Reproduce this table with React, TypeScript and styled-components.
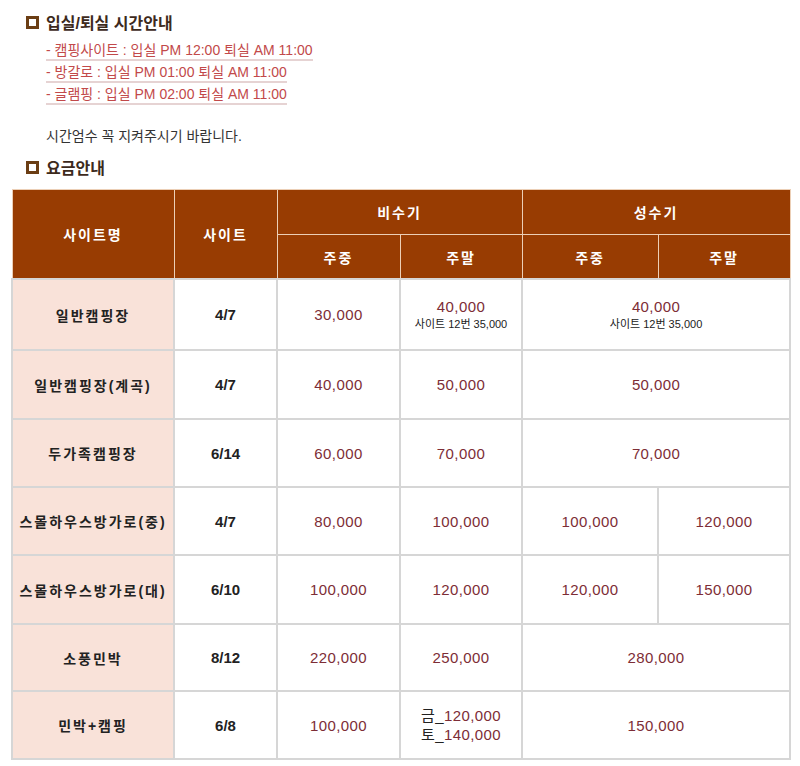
import styled, { createGlobalStyle } from 'styled-components';

const GlobalStyle = createGlobalStyle`
  body {
    margin: 0;
    background: #fff;
    font-family: 'Liberation Sans', 'Noto Sans CJK KR', sans-serif;
    color: #333;
  }
`;

const Page = styled.div`
  width: 800px;
  padding: 11px 0 0 11px;
  box-sizing: border-box;
`;

const Section = styled.div`
  padding-left: 15px;
`;

const Heading = styled.h3`
  display: flex;
  align-items: center;
  gap: 7px;
  margin: 0;
  height: 22px;
  font-size: 16px;
  font-weight: bold;
  color: #3d2a1c;
`;

const HeadIcon = styled.span`
  width: 7px;
  height: 7px;
  border: 3px solid #6b3e14;
  background: #fff;
  flex: none;
`;

const TimeList = styled.ul`
  list-style: none;
  margin: 8px 0 0;
  padding: 0 0 0 20px;
`;

const TimeItem = styled.li`
  height: 22px;
  display: flex;
  align-items: flex-start;
`;

const TimeLink = styled.a`
  font-size: 14px;
  line-height: 18px;
  color: #c2494a;
  text-decoration: none;
  border-bottom: 2px solid #e6d3d3;
`;

const Notice = styled.p`
  margin: 20px 0 11px 20px;
  font-size: 14px;
  line-height: 18px;
  color: #333;
`;

const Table = styled.table`
  margin-top: 11px;
  width: 778px;
  border-collapse: collapse;
  table-layout: fixed;
  font-size: 14px;
`;

const HeadCell = styled.th<{ $h?: number }>`
  background: #983c02;
  color: #fff;
  font-weight: bold;
  letter-spacing: 2px;
  height: ${(p) => p.$h ?? 43}px;
  border: 1px solid #eccfb6;
  padding: 0;
  text-align: center;
  font-size: 14px;
`;

const Row = styled.tr<{ $h?: number }>`
  height: ${(p) => p.$h ?? 68}px;
`;

const NameCell = styled.td`
  background: #f9e2d9;
  border: 2px solid #d6d6d6;
  text-align: center;
  font-weight: bold;
  color: #222;
  letter-spacing: 2px;
  font-size: 14px;
`;

const SiteCell = styled.td`
  border: 2px solid #d6d6d6;
  text-align: center;
  font-weight: bold;
  color: #222;
  font-size: 15px;
`;

const PriceCell = styled.td`
  border: 2px solid #d6d6d6;
  text-align: center;
  color: #7d2d36;
  font-size: 15px;
  letter-spacing: 0.4px;
  line-height: 19px;
`;

const SubNote = styled.div`
  font-size: 11px;
  line-height: 16px;
  letter-spacing: 0;
  color: #222;
`;

const Day = styled.span`
  color: #222;
`;

type Price = { v: React.ReactNode; span?: number };

const rows: { name: string; site: string; h: number; prices: Price[] }[] = [
  {
    name: '일반캠핑장',
    site: '4/7',
    h: 71,
    prices: [
      { v: '30,000' },
      { v: (<>40,000<SubNote>사이트 12번 35,000</SubNote></>) },
      { v: (<>40,000<SubNote>사이트 12번 35,000</SubNote></>), span: 2 },
    ],
  },
  {
    name: '일반캠핑장(계곡)',
    site: '4/7',
    h: 69,
    prices: [{ v: '40,000' }, { v: '50,000' }, { v: '50,000', span: 2 }],
  },
  {
    name: '두가족캠핑장',
    site: '6/14',
    h: 68,
    prices: [{ v: '60,000' }, { v: '70,000' }, { v: '70,000', span: 2 }],
  },
  {
    name: '스몰하우스방가로(중)',
    site: '4/7',
    h: 68,
    prices: [{ v: '80,000' }, { v: '100,000' }, { v: '100,000' }, { v: '120,000' }],
  },
  {
    name: '스몰하우스방가로(대)',
    site: '6/10',
    h: 69,
    prices: [{ v: '100,000' }, { v: '120,000' }, { v: '120,000' }, { v: '150,000' }],
  },
  {
    name: '소풍민박',
    site: '8/12',
    h: 67,
    prices: [{ v: '220,000' }, { v: '250,000' }, { v: '280,000', span: 2 }],
  },
  {
    name: '민박+캠핑',
    site: '6/8',
    h: 68,
    prices: [
      { v: '100,000' },
      {
        v: (
          <>
            <div><Day>금_</Day>120,000</div>
            <div><Day>토_</Day>140,000</div>
          </>
        ),
      },
      { v: '150,000', span: 2 },
    ],
  },
];

const times = [
  '- 캠핑사이트 : 입실 PM 12:00 퇴실 AM 11:00',
  '- 방갈로 : 입실 PM 01:00 퇴실 AM 11:00',
  '- 글램핑 : 입실 PM 02:00 퇴실 AM 11:00',
];

export default function App() {
  return (
    <Page>
      <GlobalStyle />
      <Section>
        <Heading>
          <HeadIcon />
          입실/퇴실 시간안내
        </Heading>
        <TimeList>
          {times.map((t) => (
            <TimeItem key={t}>
              <TimeLink href="#">{t}</TimeLink>
            </TimeItem>
          ))}
        </TimeList>
        <Notice>시간엄수 꼭 지켜주시기 바랍니다.</Notice>
        <Heading>
          <HeadIcon />
          요금안내
        </Heading>
      </Section>
      <Table>
        <colgroup>
          <col style={{ width: 162 }} />
          <col style={{ width: 103 }} />
          <col style={{ width: 123 }} />
          <col style={{ width: 122 }} />
          <col style={{ width: 136 }} />
          <col style={{ width: 132 }} />
        </colgroup>
        <thead>
          <tr>
            <HeadCell rowSpan={2}>사이트명</HeadCell>
            <HeadCell rowSpan={2}>사이트</HeadCell>
            <HeadCell colSpan={2} $h={44}>비수기</HeadCell>
            <HeadCell colSpan={2} $h={44}>성수기</HeadCell>
          </tr>
          <tr>
            <HeadCell $h={43}>주중</HeadCell>
            <HeadCell $h={43}>주말</HeadCell>
            <HeadCell $h={43}>주중</HeadCell>
            <HeadCell $h={43}>주말</HeadCell>
          </tr>
        </thead>
        <tbody>
          {rows.map((r) => (
            <Row key={r.name} $h={r.h}>
              <NameCell>{r.name}</NameCell>
              <SiteCell>{r.site}</SiteCell>
              {r.prices.map((p, i) => (
                <PriceCell key={i} colSpan={p.span}>
                  {p.v}
                </PriceCell>
              ))}
            </Row>
          ))}
        </tbody>
      </Table>
    </Page>
  );
}
